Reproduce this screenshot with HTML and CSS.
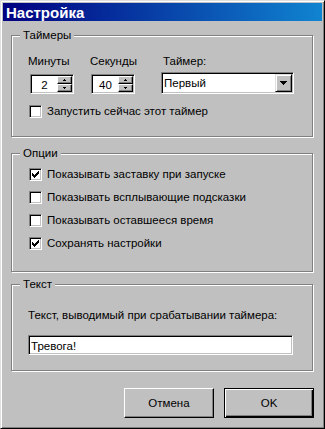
FILE: index.html
```html
<!DOCTYPE html>
<html lang="ru">
<head>
<meta charset="utf-8">
<title>Настройка</title>
<link rel="stylesheet" href="styles.css">
</head>
<body>
<div class="window">
  <div class="titlebar"><span class="title">Настройка</span></div>
  <div class="content">
    <div class="group g-timers">
      <span class="legend">Таймеры</span>
      <div class="timer-row">
        <div class="col col-min">
          <span class="lbl">Минуты</span>
          <div class="spin">
            <span class="spin-val">2</span>
            <div class="spin-btns">
              <span class="sbtn"><svg width="3" height="2" viewBox="0 0 3 2"><path d="M1 0h1v1h-1zM0 1h3v1h-3z" fill="#000"/></svg></span>
              <span class="sbtn"><svg width="3" height="2" viewBox="0 0 3 2"><path d="M0 0h3v1h-3zM1 1h1v1h-1z" fill="#000"/></svg></span>
            </div>
          </div>
        </div>
        <div class="col col-sec">
          <span class="lbl">Секунды</span>
          <div class="spin">
            <span class="spin-val">40</span>
            <div class="spin-btns">
              <span class="sbtn"><svg width="3" height="2" viewBox="0 0 3 2"><path d="M1 0h1v1h-1zM0 1h3v1h-3z" fill="#000"/></svg></span>
              <span class="sbtn"><svg width="3" height="2" viewBox="0 0 3 2"><path d="M0 0h3v1h-3zM1 1h1v1h-1z" fill="#000"/></svg></span>
            </div>
          </div>
        </div>
        <div class="col col-timer">
          <span class="lbl lbl-timer">Таймер:</span>
          <div class="combo">
            <span class="combo-val">Первый</span>
            <span class="combo-btn"><svg width="7" height="4" viewBox="0 0 7 4"><path d="M0 0h7v1h-7zM1 1h5v1h-5zM2 2h3v1h-3zM3 3h1v1h-1z" fill="#000"/></svg></span>
          </div>
        </div>
      </div>
      <div class="check check-start"><span class="box"></span><span>Запустить сейчас этот таймер</span></div>
    </div>

    <div class="group g-options">
      <span class="legend">Опции</span>
      <div class="check"><span class="box"><svg class="tick" width="7" height="7" viewBox="0 0 7 7"><path d="M6 0h1v1h-1zM5 1h2v1h-2zM0 2h1v1h-1zM4 2h3v1h-3zM0 3h2v1h-2zM3 3h3v1h-3zM0 4h5v1h-5zM1 5h3v1h-3zM2 6h1v1h-1z" fill="#000"/></svg></span><span>Показывать заставку при запуске</span></div>
      <div class="check"><span class="box"></span><span>Показывать всплывающие подсказки</span></div>
      <div class="check"><span class="box"></span><span>Показывать оставшееся время</span></div>
      <div class="check"><span class="box"><svg class="tick" width="7" height="7" viewBox="0 0 7 7"><path d="M6 0h1v1h-1zM5 1h2v1h-2zM0 2h1v1h-1zM4 2h3v1h-3zM0 3h2v1h-2zM3 3h3v1h-3zM0 4h5v1h-5zM1 5h3v1h-3zM2 6h1v1h-1z" fill="#000"/></svg></span><span>Сохранять настройки</span></div>
    </div>

    <div class="group g-text">
      <span class="legend">Текст</span>
      <div class="lbl">Текст, выводимый при срабатывании таймера:</div>
      <div class="text-input">Тревога!</div>
    </div>

    <div class="buttons">
      <div class="btn">Отмена</div>
      <div class="btn btn-default">OK</div>
    </div>
  </div>
</div>
</body>
</html>
```
FILE: styles.css
```css
* { box-sizing: border-box; }
html, body { margin: 0; padding: 0; }
body {
  font-family: "Liberation Sans", Arial, sans-serif;
  font-size: 11.5px;
  color: #000;
  background: #c0c0c0;
}
.window {
  width: 325px;
  height: 429px;
  background: #c0c0c0;
  border: 1px solid;
  border-color: #dfdfdf #000 #000 #dfdfdf;
  box-shadow: inset 1px 1px #fff, inset -1px -1px #808080;
  padding: 2px;
  display: flex;
  flex-direction: column;
}
.titlebar {
  height: 18px;
  background: linear-gradient(to right, #000080, #1084d0);
  color: #fff;
  font-weight: bold;
  font-size: 15px;
  line-height: 17px;
  padding: 1px 0 0 3px;
}
.content {
  padding: 14px 8px 0 8px;
  display: flex;
  flex-direction: column;
}
.group {
  position: relative;
  width: 302px;
  border: 1px solid #808080;
  box-shadow: inset 1px 1px #fff, 1px 1px #fff;
  padding-left: 16px;
}
.legend {
  position: absolute;
  top: -7px;
  left: 8px;
  padding: 0 3px;
  background: #c0c0c0;
  line-height: 13px;
}
.lbl { display: block; line-height: 13px; }

.g-timers { height: 102px; padding-top: 19px; }
.timer-row { display: flex; }
.col { display: flex; flex-direction: column; align-items: flex-start; }
.col-min { width: 62px; }
.col-sec { width: 71px; }
.col-min .spin { margin-left: 2px; }
.col-sec .spin { margin-left: 1px; }
.lbl-timer { margin-left: 2px; }

.spin, .combo, .text-input, .box {
  background: #fff;
  border: 1px solid;
  border-color: #808080 #fff #fff #808080;
  box-shadow: inset 1px 1px #000, inset -1px -1px #c0c0c0;
}
.spin {
  margin-top: 6px;
  width: 44px;
  height: 20px;
  padding: 1px;
  display: flex;
}
.spin-val {
  flex: 1;
  text-align: center;
  line-height: 16px;
  padding-top: 1px;
}
.spin-btns {
  width: 15px;
  display: flex;
  flex-direction: column;
}
.sbtn {
  height: 8px;
  background: #c0c0c0;
  border: 1px solid;
  border-color: #fff #000 #000 #fff;
  box-shadow: inset -1px -1px #808080;
  display: flex;
  align-items: center;
  justify-content: center;
}
.sbtn svg { display: block; }

.combo {
  margin-top: 4px;
  width: 133px;
  height: 22px;
  padding: 1px;
  display: flex;
}
.combo-val {
  flex: 1;
  line-height: 18px;
  padding-left: 1px;
}
.combo-btn {
  width: 17px;
  height: 18px;
  background: #c0c0c0;
  border: 1px solid;
  border-color: #dfdfdf #000 #000 #dfdfdf;
  box-shadow: inset 1px 1px #fff, inset -1px -1px #808080;
  display: flex;
  align-items: center;
  justify-content: center;
}
.combo-btn svg { display: block; }

.check {
  display: flex;
  align-items: center;
  gap: 5px;
  line-height: 13px;
  margin-left: 1px;
}
.check-start { margin-top: 11px; }
.box {
  width: 13px;
  height: 13px;
  flex: none;
  display: flex;
  align-items: center;
  justify-content: center;
}
.tick { display: block; }

.g-options {
  margin-top: 16px;
  height: 119px;
  padding-top: 14px;
  display: flex;
  flex-direction: column;
  gap: 10px;
}
.g-text {
  margin-top: 12px;
  height: 87px;
  padding-top: 24px;
}
.text-input {
  margin-top: 13px;
  width: 265px;
  height: 20px;
  line-height: 16px;
  padding: 2px 2px 0 2px;
}

.buttons {
  margin-top: 17px;
  display: flex;
  justify-content: flex-end;
  gap: 10px;
}
.btn {
  width: 90px;
  height: 30px;
  border: 1px solid;
  border-color: #fff #000 #000 #fff;
  box-shadow: inset -1px -1px #808080;
  display: flex;
  align-items: center;
  justify-content: center;
  line-height: 13px;
}
.btn-default {
  border-color: #000;
  box-shadow: inset 1px 1px #fff, inset -1px -1px #000, inset -2px -2px #808080;
}
```
